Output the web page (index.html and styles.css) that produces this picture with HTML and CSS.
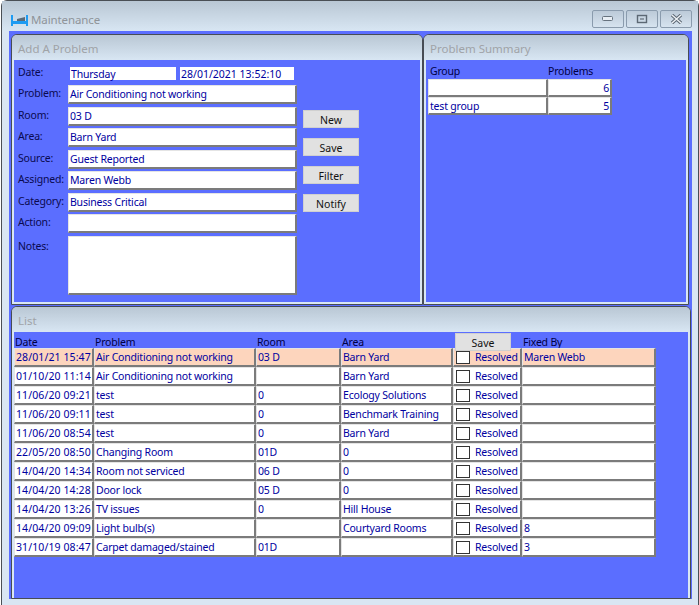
FILE: index.html
```html
<!DOCTYPE html>
<html lang="en">
<head>
<meta charset="utf-8">
<title>Maintenance</title>
<link rel="stylesheet" href="styles.css">
</head>
<body>
<div class="window">
  <header class="titlebar">
    <svg class="app-icon" width="17" height="11" viewBox="0 0 17 11">
      <rect x="0" y="0" width="2" height="11" fill="#1e9bf2"/>
      <rect x="15" y="0" width="2" height="11" fill="#1e9bf2"/>
      <rect x="1" y="6" width="15" height="3" fill="#1e9bf2"/>
      <path d="M6 6V4L14 2V6Z" fill="#5a6a78"/>
    </svg>
    <span class="title">Maintenance</span>
    <div class="controls">
      <button class="ctl"><svg width="12" height="6" viewBox="0 0 12 6"><rect x="0.5" y="0.5" width="10" height="4" rx="1" fill="#e8eef4" stroke="#66727e"/></svg></button>
      <button class="ctl"><svg width="12" height="10" viewBox="0 0 12 10"><rect x="1.5" y="1.5" width="9" height="7" fill="none" stroke="#5c6874" stroke-width="1.4"/><rect x="4" y="4" width="4" height="2" fill="#8b97a3"/></svg></button>
      <button class="ctl"><svg width="13" height="10" viewBox="0 0 13 10"><path d="M2 1L11 9M11 1L2 9" stroke="#5c6874" stroke-width="3.4"/><path d="M2 1L11 9M11 1L2 9" stroke="#eef2f6" stroke-width="1.4"/></svg></button>
    </div>
  </header>
  <main class="client">
    <div class="top-row">
      <section class="panel panel-add">
        <h2 class="panel-head">Add A Problem</h2>
        <div class="panel-body add-body">
          <div class="date-row">
            <span class="label">Date:</span>
            <span class="date-day">Thursday</span>
            <span class="date-full">28/01/2021 13:52:10</span>
          </div>
          <div class="form-main">
            <div class="fields">
              <div class="field"><span class="label">Problem:</span><span class="input">Air Conditioning not working</span></div>
              <div class="field"><span class="label">Room:</span><span class="input">03 D</span></div>
              <div class="field"><span class="label">Area:</span><span class="input">Barn Yard</span></div>
              <div class="field"><span class="label">Source:</span><span class="input">Guest Reported</span></div>
              <div class="field"><span class="label">Assigned:</span><span class="input">Maren Webb</span></div>
              <div class="field"><span class="label">Category:</span><span class="input">Business Critical</span></div>
              <div class="field"><span class="label">Action:</span><span class="input"></span></div>
              <div class="field field-notes"><span class="label">Notes:</span><span class="input input-notes"></span></div>
            </div>
            <div class="actions">
              <button class="btn">New</button>
              <button class="btn">Save</button>
              <button class="btn">Filter</button>
              <button class="btn">Notify</button>
            </div>
          </div>
        </div>
      </section>
      <section class="panel panel-summary">
        <h2 class="panel-head">Problem Summary</h2>
        <div class="panel-body summary-body">
          <div class="summary-row summary-headings"><span>Group</span><span>Problems</span></div>
          <div class="summary-row"><span class="cell"></span><span class="cell num">6</span></div>
          <div class="summary-row"><span class="cell">test group</span><span class="cell num">5</span></div>
        </div>
      </section>
    </div>
    <section class="panel panel-list">
      <h2 class="panel-head">List</h2>
      <div class="panel-body list-body">
        <button class="btn list-save">Save</button>
        <div class="list-row list-headings"><span>Date</span><span>Problem</span><span>Room</span><span>Area</span><span></span><span>Fixed By</span></div>
        <div class="list-row hot"><span class="cell">28/01/21 15:47</span><span class="cell">Air Conditioning not working</span><span class="cell">03 D</span><span class="cell">Barn Yard</span><span class="cell res"><i class="check"></i>Resolved</span><span class="cell">Maren Webb</span></div>
        <div class="list-row"><span class="cell">01/10/20 11:14</span><span class="cell">Air Conditioning not working</span><span class="cell"></span><span class="cell">Barn Yard</span><span class="cell res"><i class="check"></i>Resolved</span><span class="cell"></span></div>
        <div class="list-row"><span class="cell">11/06/20 09:21</span><span class="cell">test</span><span class="cell">0</span><span class="cell">Ecology Solutions</span><span class="cell res"><i class="check"></i>Resolved</span><span class="cell"></span></div>
        <div class="list-row"><span class="cell">11/06/20 09:11</span><span class="cell">test</span><span class="cell">0</span><span class="cell">Benchmark Training</span><span class="cell res"><i class="check"></i>Resolved</span><span class="cell"></span></div>
        <div class="list-row"><span class="cell">11/06/20 08:54</span><span class="cell">test</span><span class="cell">0</span><span class="cell">Barn Yard</span><span class="cell res"><i class="check"></i>Resolved</span><span class="cell"></span></div>
        <div class="list-row"><span class="cell">22/05/20 08:50</span><span class="cell">Changing Room</span><span class="cell">01D</span><span class="cell">0</span><span class="cell res"><i class="check"></i>Resolved</span><span class="cell"></span></div>
        <div class="list-row"><span class="cell">14/04/20 14:34</span><span class="cell">Room not serviced</span><span class="cell">06 D</span><span class="cell">0</span><span class="cell res"><i class="check"></i>Resolved</span><span class="cell"></span></div>
        <div class="list-row"><span class="cell">14/04/20 14:28</span><span class="cell">Door lock</span><span class="cell">05 D</span><span class="cell">0</span><span class="cell res"><i class="check"></i>Resolved</span><span class="cell"></span></div>
        <div class="list-row"><span class="cell">14/04/20 13:26</span><span class="cell">TV issues</span><span class="cell">0</span><span class="cell">Hill House</span><span class="cell res"><i class="check"></i>Resolved</span><span class="cell"></span></div>
        <div class="list-row"><span class="cell">14/04/20 09:09</span><span class="cell">Light bulb(s)</span><span class="cell"></span><span class="cell">Courtyard Rooms</span><span class="cell res"><i class="check"></i>Resolved</span><span class="cell">8</span></div>
        <div class="list-row"><span class="cell">31/10/19 08:47</span><span class="cell">Carpet damaged/stained</span><span class="cell">01D</span><span class="cell"></span><span class="cell res"><i class="check"></i>Resolved</span><span class="cell">3</span></div>
      </div>
    </section>
  </main>
</div>
</body>
</html>
```
FILE: styles.css
```css
* { box-sizing: border-box; }
html, body { margin: 0; padding: 0; background: #fff; }
body {
  width: 699px; height: 605px; overflow: hidden;
  font-family: "Noto Sans", "Liberation Sans", Arial, sans-serif;
  font-size: 10.5px; color: #0a0a50;
  letter-spacing: -.2px;
}
.window {
  width: 698px; height: 605px; margin-left: 1px;
  border: 1px solid #4a4f55; border-bottom: 0;
  border-radius: 6px 6px 0 0;
  background: #d9e6f3;
}
.titlebar {
  height: 30px; display: flex; align-items: flex-start; padding: 9px 6px 0 9px;
  background: linear-gradient(#b9c7d4, #d8e6f3);
}
.app-icon { margin-top: 5px; }
.title { margin-left: 3px; font-size: 11.5px; line-height: 20px; color: #8f9499; letter-spacing: -.1px; }
.controls { margin-left: auto; display: flex; gap: 2px; }
.ctl {
  width: 32px; height: 18px; padding: 0; display: flex; align-items: center; justify-content: center;
  border: 1px solid #8a9bad; border-radius: 2px;
  background: linear-gradient(#bccad8, #d6e3ef);
}
.client {
  margin-left: 7px; width: 683px; height: 568px; padding: 3px 1px 0 2px;
  background: #5b6eff;
}
.top-row { display: flex; height: 271px; }
.panel {
  border: 1px solid #474c55; border-bottom-width: 1px;
  border-radius: 6px 6px 0 0;
  background: #d9e6f3;
  padding: 0 2px 2px 2px;
  display: flex; flex-direction: column;
}
.panel-add { width: 412px; }
.panel-summary { width: 266px; }
.panel-list { margin-top: 1px; width: 680px; height: 293px; padding-bottom: 0; }
.panel-head {
  margin: 0 -2px; height: 25px; flex: none; padding: 2px 0 0 6px;
  display: flex; align-items: center;
  font-size: 11.5px; font-weight: normal; color: #a0a3a7; letter-spacing: 0;
  border-radius: 5px 5px 0 0;
  background: linear-gradient(#b9c7d4, #d8e6f3);
}
.panel-body { flex: 1; background: #5b6eff; position: relative; min-height: 0; }
.label { color: #0a0a50; }
.add-body { padding: 7px 0 0 4px; }
.date-row { display: flex; align-items: flex-start; height: 13px; }
.date-row .label { width: 52px; line-height: 10px; }
.date-day, .date-full { background: #fff; height: 13px; line-height: 14px; padding-left: 1px; color: #0000a0; }
.date-day { width: 106px; }
.date-full { width: 114px; margin-left: 4px; letter-spacing: 0; }
.form-main { display: flex; margin-top: 5px; }
.fields { width: 279px; flex: none; }
.field { display: flex; height: 21.5px; }
.field .label { width: 50px; flex: none; line-height: 17px; }
.input {
  width: 229px; flex: none; height: 19px; line-height: 17px; padding-left: 1px;
  background: #fff; color: #0000a0;
  border: 1px solid #e4e4e4; border-right: 2px solid #7b7b7b; border-bottom: 2px solid #7b7b7b;
}
.field-notes { height: 58px; }
.field-notes .label { line-height: 20px; }
.input-notes { height: 59px; }
.actions { display: flex; flex-direction: column; gap: 10px; margin: 25px 0 0 6px; }
.btn {
  width: 56px; height: 18px; padding: 1px 0 0;
  font: inherit; color: #111;
  background: #e1e1e1; border: 1px solid #d0d0d0;
}
.summary-body { padding: 4px 0 0 2px; }
.summary-row { display: grid; grid-template-columns: 120px 64px; }
.summary-headings { height: 15px; color: #000044; line-height: 15px; }
.summary-headings span:first-child { padding-left: 2px; }
.summary-row .cell { height: 18px; }
.cell {
  display: block; overflow: hidden; white-space: nowrap;
  height: 19px; line-height: 16px; padding-left: 1px;
  background: #fff; color: #0000a0;
  border: 1px solid #e4e4e4; border-right: 2px solid #7b7b7b; border-bottom: 2px solid #7b7b7b;
}
.list-row .cell:first-child { letter-spacing: .1px; }
.num { text-align: right; padding-right: 1px; }
.list-row { display: grid; grid-template-columns: 80px 162px 85px 112px 69px 134px; }
.list-headings { height: 16px; line-height: 20px; color: #000044; }
.list-headings span { padding-left: 1px; }
.hot .cell { background: #fdd5bd; }
.res { display: flex; align-items: center; padding-left: 2px; }
.check { width: 14px; height: 13px; border: 1px solid #333; background: #fff; margin-right: 5px; flex: none; }
.list-save { position: absolute; left: 441px; top: 1px; }
```
